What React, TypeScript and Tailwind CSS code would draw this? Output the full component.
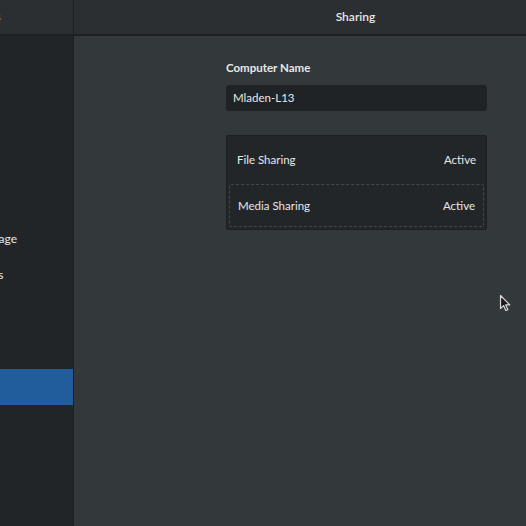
const font = { fontFamily: 'Lato, "Noto Sans", sans-serif' };

const sidebarItems = [
  { label: "Notifications", active: false, gap: false },
  { label: "Search", active: false, gap: false },
  { label: "Region & Language", active: false, gap: false },
  { label: "Universal Access", active: false, gap: false },
  { label: "Privacy", active: false, gap: false },
  { label: "Power", active: false, gap: true },
  { label: "Sharing", active: true, gap: false },
  { label: "Sound", active: false, gap: false },
];

function Cursor() {
  return (
    <svg
      className="absolute left-[499px] top-[294px]"
      width="13"
      height="18"
      viewBox="0 0 13 18"
    >
      <path
        d="M1.5 1.5 L1.5 14.5 L4.6 11.6 L6.8 16.5 L8.8 15.6 L6.7 10.9 L10.8 10.9 Z"
        fill="#1b1b1b"
        stroke="#d8d8d8"
        strokeWidth="1.2"
        strokeLinejoin="round"
      />
    </svg>
  );
}

export default function App() {
  return (
    <div
      className="relative w-[526px] h-[526px] overflow-hidden bg-[#33383b] text-[#e6e8e9] flex flex-col"
      style={font}
    >
      {/* header bar */}
      <div className="flex h-[36px] shrink-0 bg-[#2c2f32] border-b-2 border-[#1d1f21]">
        <div className="w-[74px] shrink-0 overflow-hidden border-r border-[#1d1f21]">
          <div className="w-[220px] -ml-[131px] h-full flex items-center justify-center text-[12px] font-bold">
            Settings
          </div>
        </div>
        <div className="flex-1 flex items-center justify-center pl-[111px] text-[12px] font-semibold">
          Sharing
        </div>
      </div>

      <div className="flex flex-1 min-h-0">
        {/* sidebar, scrolled off to the left */}
        <div className="w-[74px] shrink-0 overflow-hidden bg-[#222528] border-r border-[#1d1f21]">
          <div className="w-[220px] -ml-[130px] pt-[113px] flex flex-col text-[12px]">
            {sidebarItems.map((it) => (
              <div
                key={it.label}
                className={`h-[36px] flex items-center pl-[46px] ${
                  it.active ? "bg-[#215d9c] text-white" : ""
                } ${it.gap ? "mb-[4px]" : ""}`}
              >
                {it.label}
              </div>
            ))}
          </div>
        </div>

        {/* main pane */}
        <div className="flex-1 flex justify-center pl-[113px] pt-[24px]">
          <div className="w-[261px] flex flex-col">
            <div className="text-[11.5px] font-bold leading-[16px]">Computer Name</div>
            <div className="mt-[9px] h-[26px] rounded-[3px] bg-[#202326] flex items-center px-[7px] text-[11.5px]">
              Mladen-L13
            </div>

            <div className="mt-[24px] border border-[#1d2022] bg-[#232629] rounded-[2px] flex flex-col text-[11.5px]">
              <div className="h-[48px] flex items-center justify-between px-[10px]">
                <span>File Sharing</span>
                <span>Active</span>
              </div>
              <div className="mx-[2px] mb-[2px] h-[43px] flex items-center justify-between px-[8px] border border-dashed border-[#43484c] rounded-[2px]">
                <span>Media Sharing</span>
                <span>Active</span>
              </div>
            </div>
          </div>
        </div>
      </div>

      <Cursor />
    </div>
  );
}
